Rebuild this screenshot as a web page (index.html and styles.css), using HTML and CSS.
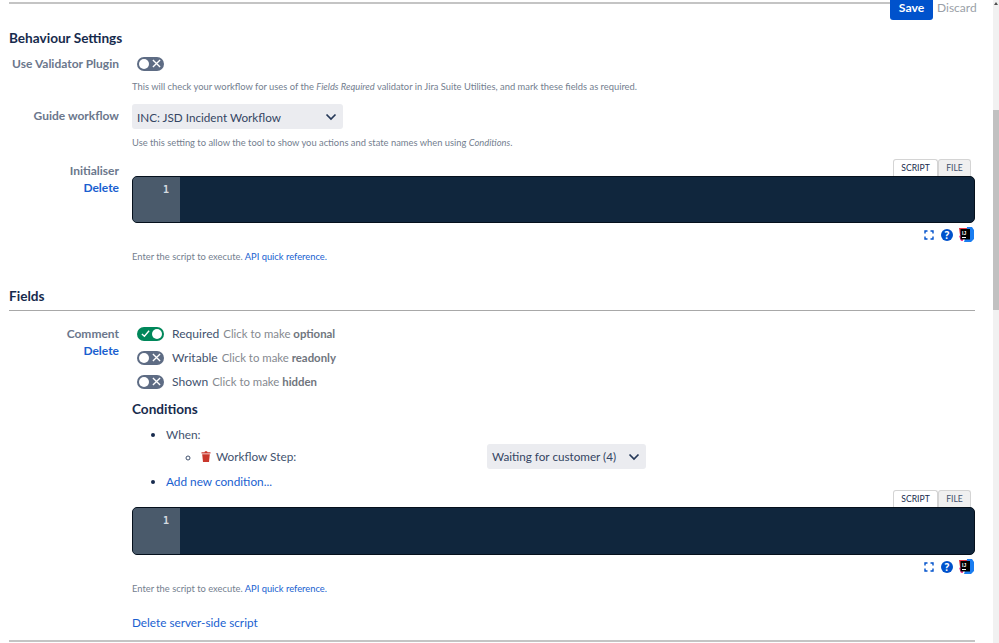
FILE: index.html
```html
<!DOCTYPE html>
<html lang="en">
<head>
<meta charset="utf-8">
<title>Behaviour Settings</title>
<link rel="stylesheet" href="styles.css">
</head>
<body>
<div class="scrollbar">
  <span class="arrow"></span>
  <span class="thumb"></span>
</div>
<main class="page">
  <header class="topbar">
    <div class="toprule"></div>
    <button class="save">Save</button>
    <a class="discard">Discard</a>
  </header>

  <h2 class="section-title first">Behaviour Settings</h2>

  <div class="row row-validator">
    <div class="label">Use Validator Plugin</div>
    <div class="control">
      <div class="toggles-line">
        <span class="toggle off"><span class="knob"></span><svg class="mark" viewBox="0 0 10 10"><path d="M1 1l8 8M9 1l-8 8"/></svg></span>
      </div>
      <p class="help help-validator">This will check your workflow for uses of the <em>Fields Required</em> validator in Jira Suite Utilities, and mark these fields as required.</p>
    </div>
  </div>

  <div class="row row-guide">
    <div class="label label-guide">Guide workflow</div>
    <div class="control">
      <div class="select select-guide"><span>INC: JSD Incident Workflow</span><svg class="chev" viewBox="0 0 12 8"><path d="M1.5 1.5L6 6l4.5-4.5"/></svg></div>
      <p class="help help-guide">Use this setting to allow the tool to show you actions and state names when using <em>Conditions</em>.</p>
    </div>
  </div>

  <div class="row row-init">
    <div class="label label-init">Initialiser<a class="delete">Delete</a></div>
    <div class="control">
      <div class="tabs"><span class="tab active">SCRIPT</span><span class="tab">FILE</span></div>
      <div class="editor"><div class="gutter">1</div></div>
      <div class="tools">
        <svg class="tool" viewBox="0 0 10 10"><path d="M1 3.5V1h2.5M6.5 1H9v2.5M9 6.5V9H6.5M3.5 9H1V6.5"/></svg>
        <svg class="help-icon" viewBox="0 0 12 12"><circle cx="6" cy="6" r="6"/><text x="6" y="9.5" text-anchor="middle">?</text></svg>
        <svg class="ij" viewBox="0 0 15 15"><path class="ij-red" d="M0 1h8v7H1z"/><path class="ij-pink" d="M0 9l4-2v7H2z"/><path class="ij-blue" d="M8 0h5l2 3v9l-3 3H5l2-6z"/><rect class="ij-black" x="1.5" y="2" width="9.5" height="10.5"/><text class="ij-text" x="3" y="7.5">IJ</text><rect class="ij-line" x="3" y="10" width="4" height="1"/></svg>
      </div>
      <p class="help help-script">Enter the script to execute. <a>API quick reference.</a></p>
    </div>
  </div>

  <h2 class="section-title fields-title">Fields</h2>
  <div class="rule"></div>

  <div class="row row-field">
    <div class="label label-field">Comment<a class="delete">Delete</a></div>
    <div class="control">
      <div class="toggles-line line-req">
        <span class="toggle on"><svg class="mark check" viewBox="0 0 10 10"><path d="M1 5.5l2.8 2.5L9 2"/></svg><span class="knob"></span></span>
        <span class="state">Required</span><span class="hint">Click to make <b>optional</b></span>
      </div>
      <div class="toggles-line line-write">
        <span class="toggle off"><span class="knob"></span><svg class="mark" viewBox="0 0 10 10"><path d="M1 1l8 8M9 1l-8 8"/></svg></span>
        <span class="state">Writable</span><span class="hint">Click to make <b>readonly</b></span>
      </div>
      <div class="toggles-line line-shown">
        <span class="toggle off"><span class="knob"></span><svg class="mark" viewBox="0 0 10 10"><path d="M1 1l8 8M9 1l-8 8"/></svg></span>
        <span class="state">Shown</span><span class="hint">Click to make <b>hidden</b></span>
      </div>

      <h3 class="conditions">Conditions</h3>
      <ul class="cond-list">
        <li class="when">When:
          <ul class="sub-list">
            <li>
              <div class="cond-line">
                <span class="step-label"><svg class="trash" viewBox="0 0 10 11"><path d="M3.5 1.2L4 .3h2l.5.9H9.5v1.3H.5V1.2z"/><path d="M1.2 3.3h7.6L8 11H2z"/></svg>Workflow Step:</span>
                <div class="select select-step"><span>Waiting for customer (4)</span><svg class="chev" viewBox="0 0 12 8"><path d="M1.5 1.5L6 6l4.5-4.5"/></svg></div>
              </div>
            </li>
          </ul>
        </li>
        <li class="add"><a>Add new condition...</a></li>
      </ul>

      <div class="tabs"><span class="tab active">SCRIPT</span><span class="tab">FILE</span></div>
      <div class="editor editor-two"><div class="gutter">1</div></div>
      <div class="tools">
        <svg class="tool" viewBox="0 0 10 10"><path d="M1 3.5V1h2.5M6.5 1H9v2.5M9 6.5V9H6.5M3.5 9H1V6.5"/></svg>
        <svg class="help-icon" viewBox="0 0 12 12"><circle cx="6" cy="6" r="6"/><text x="6" y="9.5" text-anchor="middle">?</text></svg>
        <svg class="ij" viewBox="0 0 15 15"><path class="ij-red" d="M0 1h8v7H1z"/><path class="ij-pink" d="M0 9l4-2v7H2z"/><path class="ij-blue" d="M8 0h5l2 3v9l-3 3H5l2-6z"/><rect class="ij-black" x="1.5" y="2" width="9.5" height="10.5"/><text class="ij-text" x="3" y="7.5">IJ</text><rect class="ij-line" x="3" y="10" width="4" height="1"/></svg>
      </div>
      <p class="help help-script">Enter the script to execute. <a>API quick reference.</a></p>
      <a class="delete-server">Delete server-side script</a>
    </div>
  </div>
  <div class="rule rule-bottom"></div>
</main>
</body>
</html>
```
FILE: styles.css
```css
html, body {
  margin: 0;
  padding: 0;
  height: 643px;
  overflow: hidden;
  background: #fff;
}
body {
  display: flex;
  flex-direction: row-reverse;
  font-family: Lato, "Noto Sans", sans-serif;
  font-size: 11.8px;
  color: #42526e;
}
a { color: #1a5fd0; text-decoration: none; }
.scrollbar {
  width: 6px;
  height: 643px;
  flex: none;
  background: #f1f1f1;
  display: flex;
  flex-direction: column;
}
.arrow {
  height: 0;
  width: 0;
  margin: 2px 0 0 1px;
  border-left: 2px solid transparent;
  border-right: 2px solid transparent;
  border-bottom: 3px solid #505050;
}
.thumb {
  margin-top: 105px;
  height: 200px;
  background: #c1c1c1;
}
.page {
  flex: 1;
  min-width: 0;
  padding: 0 18px 0 9px;
}
.topbar {
  display: flex;
  height: 20px;
  align-items: flex-start;
}
.toprule {
  flex: 1;
  height: 2px;
  margin-top: 2px;
  background: #c4c4c4;
}
.save {
  width: 43px;
  height: 20px;
  padding: 0 0 6px;
  border: 0;
  border-radius: 0 0 3px 3px;
  background: #0052cc;
  color: #fff;
  font: 700 12.2px Lato, sans-serif;
}
.discard {
  width: 38px;
  margin: -1px 0 0 4px;
  color: #9a9fa8;
  font-size: 12px;
  line-height: 17px;
}
.section-title {
  margin: 0;
  color: #172b4d;
  font-size: 13.6px;
  font-weight: 700;
  line-height: 18px;
}
.first { margin-top: 9px; }
.row { display: flex; }
.label {
  width: 110px;
  flex: none;
  margin-right: 13px;
  text-align: right;
  color: #6b778c;
  font-size: 12px;
  font-weight: 700;
  line-height: 17px;
  white-space: nowrap;
}
.delete { display: block; font-weight: 700; }
.control { flex: 1; min-width: 0; }
.row-validator { margin-top: 8px; }
.help {
  margin: 0;
  color: #74808f;
  font-size: 9.35px;
  line-height: 12px;
  white-space: nowrap;
}
.help-validator { margin-top: 9px; }
.toggles-line {
  display: flex;
  align-items: center;
  height: 17px;
  padding-left: 5px;
  white-space: nowrap;
}
.toggle {
  width: 27px;
  height: 14px;
  flex: none;
  box-sizing: border-box;
  border-radius: 7px;
  padding: 2px 3px 2px 2px;
  display: flex;
  align-items: center;
  justify-content: space-between;
}
.toggle.off { background: #5e6c84; }
.toggle.on { background: #00875a; padding: 2px 2px 2px 4px; }
.knob {
  width: 10px;
  height: 10px;
  border-radius: 50%;
  background: #fff;
}
.mark {
  width: 9px;
  height: 9px;
  fill: none;
  stroke: #fff;
  stroke-width: 1.5;
}
.row-guide { margin-top: 11px; }
.label-guide { padding-top: 3px; }
.select {
  display: flex;
  align-items: center;
  justify-content: space-between;
  box-sizing: border-box;
  height: 25px;
  background: #ebecf0;
  border-radius: 3px;
  padding: 0 6px 0 5px;
  color: #344563;
  font-size: 11.7px;
  white-space: nowrap;
}
.select-guide { width: 211px; }
.chev {
  width: 12px;
  height: 8px;
  fill: none;
  stroke: #253858;
  stroke-width: 1.7;
}
.help-guide { margin-top: 8px; }
.row-init { margin-top: 10px; }
.label-init { padding-top: 3px; }
.tabs {
  display: flex;
  justify-content: flex-end;
  height: 17px;
  padding-right: 4px;
}
.tab {
  box-sizing: border-box;
  height: 17px;
  width: 33px;
  border: 1px solid #d4d4d4;
  border-bottom: 0;
  border-radius: 3px 3px 0 0;
  background: #f0f0f0;
  color: #42526e;
  font-size: 8.6px;
  line-height: 16px;
  text-align: center;
}
.tab.active {
  width: 45px;
  background: #fff;
  color: #172b4d;
}
.editor {
  height: 47px;
  box-sizing: border-box;
  background: #10263d;
  border: 1px solid #05101c;
  border-radius: 5px;
  overflow: hidden;
}
.editor-two { height: 48px; }
.gutter {
  width: 47px;
  height: 100%;
  box-sizing: border-box;
  padding: 6px 11px 0 0;
  background: #4a5a6b;
  color: #d5dbe0;
  font: 700 10px/14px "DejaVu Sans Mono", monospace;
  text-align: right;
}
.tools {
  display: flex;
  justify-content: flex-end;
  align-items: center;
  gap: 7px;
  height: 15px;
  margin-top: 4px;
  padding-right: 2px;
}
.tool {
  width: 10px;
  height: 10px;
  fill: none;
  stroke: #0052cc;
  stroke-width: 1.4;
}
.help-icon { width: 12px; height: 12px; }
.help-icon circle { fill: #0052cc; }
.help-icon text {
  fill: #fff;
  font: 700 10px "Noto Sans", sans-serif;
}
.ij { width: 15px; height: 15px; margin-left: -1px; margin-right: -1px; }
.ij-red { fill: #e6353f; }
.ij-pink { fill: #f0429a; }
.ij-blue { fill: #1a7df0; }
.ij-black { fill: #000; }
.ij-line { fill: #fff; }
.ij-text {
  fill: #fff;
  font: 700 5px "Liberation Sans", sans-serif;
}
.help-script { margin-top: 9px; }
.fields-title { margin-top: 24px; }
.rule {
  height: 1px;
  background: #a8a8a8;
  margin-top: 5px;
}
.row-field { margin-top: 14px; }
.line-write { margin-top: 7px; }
.line-shown { margin-top: 7px; }
.state { margin-left: 8px; color: #42526e; font-size: 12.1px; }
.hint { margin-left: 4px; color: #85898f; font-size: 11.4px; }
.hint b { color: #70757d; font-weight: 700; }
.conditions {
  margin: 10px 0 0;
  color: #172b4d;
  font-size: 13.6px;
  font-weight: 700;
  line-height: 18px;
}
.cond-list {
  margin: 0;
  padding: 0 0 0 34px;
  color: #172b4d;
  line-height: 17px;
}
.when { margin-top: 8px; color: #42526e; }
.when::marker, .add::marker { color: #172b4d; }
.sub-list {
  margin: 0;
  padding: 0 0 0 35px;
  list-style: circle;
}
.cond-line {
  display: flex;
  align-items: center;
  margin-top: 1px;
}
.step-label {
  display: flex;
  align-items: center;
  width: 286px;
  flex: none;
}
.trash {
  width: 10px;
  height: 11px;
  margin-right: 5px;
  fill: #c9372c;
}
.select-step { width: 159px; }
.add { margin-top: 4px; }
.delete-server {
  display: block;
  margin-top: 19px;
  font-size: 11.75px;
  line-height: 17px;
}
.rule-bottom { margin-top: 9px; height: 2px; background: #c4c4c4; }
```
